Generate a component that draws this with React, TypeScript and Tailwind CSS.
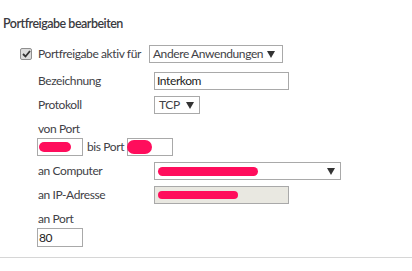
import React from 'react';

function Arrow() {
  return (
    <svg width="8" height="7" viewBox="0 0 8 7" className="shrink-0">
      <path d="M0 0 H8 L4 7 Z" fill="#333" />
    </svg>
  );
}

function Blob({ className }: { className: string }) {
  return <span className={`block rounded-full bg-[#ff0d5c] ${className}`} />;
}

function Label({ children }: { children: React.ReactNode }) {
  return <div className="w-[116px] shrink-0 leading-[18px]">{children}</div>;
}

export default function App() {
  return (
    <div className="w-[412px] h-[271px] bg-white font-['Lato',sans-serif] text-[12px] tracking-[-0.4px] whitespace-nowrap text-[#414146] overflow-hidden">
      <div className="pt-[15px] pl-[3px] h-[33px] leading-[18px] text-[12.5px] font-semibold tracking-[-0.5px] text-[#3a3a40]">
        Portfreigabe bearbeiten
      </div>

      <div className="mt-[12px] flex items-center h-[18px] pl-[20px]">
        <div className="w-[12px] h-[12px] rounded-[2px] border border-[#8f8f8f] bg-[#dcdcdc] flex items-center justify-center">
          <svg width="9" height="8" viewBox="0 0 9 8">
            <path d="M1 4 L3.5 6.5 L8 1" stroke="#333" strokeWidth="1.8" fill="none" />
          </svg>
        </div>
        <span className="ml-[6px] leading-[18px]">Portfreigabe aktiv für</span>
        <div className="ml-[8px] w-[134px] h-[18px] border border-[#a9a9a9] flex items-center pl-[3px] pr-[7px]">
          <span>Andere Anwendungen</span>
          <span className="ml-auto"><Arrow /></span>
        </div>
      </div>

      <div className="pl-[38px]">
        <div className="mt-[9px] flex items-center h-[18px]">
          <Label>Bezeichnung</Label>
          <div className="w-[135px] h-[18px] border border-[#a9a9a9] pl-[2px] leading-[16px] text-[#222]">Interkom</div>
        </div>

        <div className="mt-[6px] flex items-center h-[18px]">
          <Label>Protokoll</Label>
          <div className="w-[46px] h-[18px] border border-[#a9a9a9] flex items-center justify-between pl-[4px] pr-[5px]">
            <span>TCP</span>
            <Arrow />
          </div>
        </div>

        <div className="mt-[6px] h-[18px] leading-[18px]">von Port</div>

        <div className="flex items-center h-[18px] ml-[-1px]">
          <div className="w-[46px] h-[18px] border border-[#a9a9a9] flex items-center pl-[1px]">
            <Blob className="w-[32px] h-[10px]" />
          </div>
          <span className="ml-[4px] leading-[18px]">bis Port</span>
          <div className="ml-[3px] w-[46px] h-[18px] border border-[#a9a9a9] flex items-center">
            <Blob className="w-[25px] h-[14px] -ml-[1px]" />
          </div>
        </div>

        <div className="mt-[6px] flex items-center h-[18px]">
          <Label>an Computer</Label>
          <div className="w-[187px] h-[18px] border border-[#a9a9a9] flex items-center justify-between pl-[3px] pr-[5px]">
            <Blob className="w-[100px] h-[9px]" />
            <Arrow />
          </div>
        </div>

        <div className="mt-[6px] flex items-center h-[18px]">
          <Label>an IP-Adresse</Label>
          <div className="w-[135px] h-[18px] border border-[#a9a9a9] bg-[#e9e8e1] flex items-center pl-[3px]">
            <Blob className="w-[80px] h-[8px]" />
          </div>
        </div>

        <div className="mt-[6px] h-[18px] leading-[18px]">an Port</div>

        <div className="h-[19px] w-[46px] ml-[-1px] border border-[#a9a9a9] pl-[1px] leading-[17px] text-[#222]">80</div>
      </div>

      <div className="mt-[10px] h-[1px] bg-[#d6d6d6]" />
    </div>
  );
}
